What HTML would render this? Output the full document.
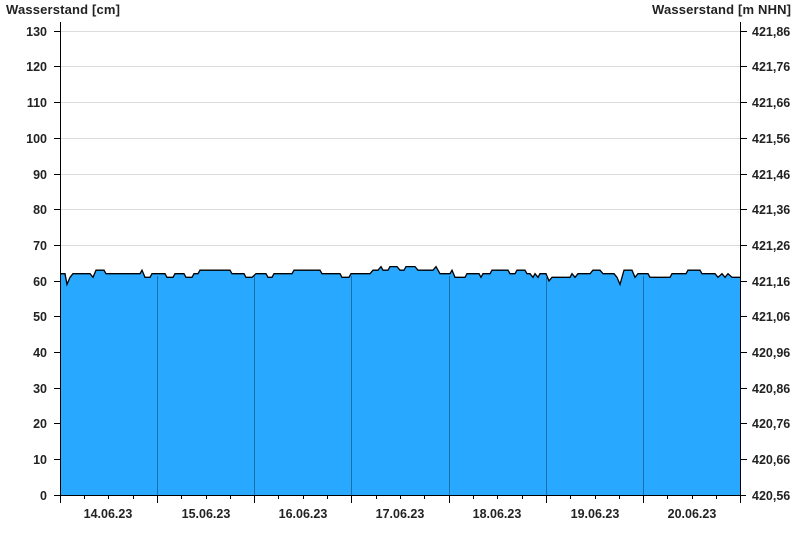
<!DOCTYPE html>
<html><head><meta charset="utf-8"><style>
html,body{margin:0;padding:0;background:#fff;width:800px;height:550px;overflow:hidden}
svg text{font-family:"Liberation Sans",Arial,sans-serif;font-weight:bold;font-size:12.5px;fill:#222}
svg text.t{font-size:13px}
</style></head><body>
<svg width="800" height="550" xmlns="http://www.w3.org/2000/svg">
<g stroke="#ddd" stroke-width="1">
<line x1="60" y1="31.5" x2="740" y2="31.5"/><line x1="60" y1="66.5" x2="740" y2="66.5"/>
<line x1="60" y1="102.5" x2="740" y2="102.5"/><line x1="60" y1="138.5" x2="740" y2="138.5"/>
<line x1="60" y1="174.5" x2="740" y2="174.5"/><line x1="60" y1="209.5" x2="740" y2="209.5"/>
<line x1="60" y1="245.5" x2="740" y2="245.5"/>
</g>
<polygon fill="#29a8ff" stroke="none" points="60,495 60,273.7 65,273.7 67,284.4 70,277.3 73,273.7 90,273.7 93,277.3 96,270.2 104,270.2 106,273.7 140,273.7 142,270.2 145,277.3 150,277.3 152,273.7 165,273.7 167,277.3 173,277.3 175,273.7 184,273.7 186,277.3 192,277.3 194,273.7 198,273.7 200,270.2 230,270.2 232,273.7 244,273.7 246,277.3 252,277.3 256,273.7 266,273.7 268,277.3 272,277.3 274,273.7 292,273.7 294,270.2 320,270.2 322,273.7 340,273.7 342,277.3 349,277.3 351,273.7 370,273.7 373,270.2 378,270.2 381,266.6 383,270.2 388,270.2 390,266.6 397,266.6 400,270.2 404,270.2 406,266.6 415,266.6 418,270.2 433,270.2 436,266.6 440,273.7 450,273.7 452,270.2 455,277.3 465,277.3 467,273.7 479,273.7 481,277.3 483,273.7 490,273.7 492,270.2 508,270.2 510,273.7 515,273.7 517,270.2 525,270.2 527,273.7 530,273.7 533,277.3 535,273.7 538,277.3 540,273.7 546,273.7 549,280.9 552,277.3 570,277.3 572,273.7 575,277.3 578,273.7 590,273.7 593,270.2 600,270.2 603,273.7 614,273.7 617,277.3 620,284.4 624,270.2 632,270.2 635,277.3 638,273.7 648,273.7 650,277.3 670,277.3 672,273.7 686,273.7 688,270.2 700,270.2 702,273.7 715,273.7 718,277.3 722,273.7 725,277.3 728,273.7 732,277.3 740,277.3 740,495"/>
<polyline fill="none" stroke="#000" stroke-width="1.3" points="60,273.7 65,273.7 67,284.4 70,277.3 73,273.7 90,273.7 93,277.3 96,270.2 104,270.2 106,273.7 140,273.7 142,270.2 145,277.3 150,277.3 152,273.7 165,273.7 167,277.3 173,277.3 175,273.7 184,273.7 186,277.3 192,277.3 194,273.7 198,273.7 200,270.2 230,270.2 232,273.7 244,273.7 246,277.3 252,277.3 256,273.7 266,273.7 268,277.3 272,277.3 274,273.7 292,273.7 294,270.2 320,270.2 322,273.7 340,273.7 342,277.3 349,277.3 351,273.7 370,273.7 373,270.2 378,270.2 381,266.6 383,270.2 388,270.2 390,266.6 397,266.6 400,270.2 404,270.2 406,266.6 415,266.6 418,270.2 433,270.2 436,266.6 440,273.7 450,273.7 452,270.2 455,277.3 465,277.3 467,273.7 479,273.7 481,277.3 483,273.7 490,273.7 492,270.2 508,270.2 510,273.7 515,273.7 517,270.2 525,270.2 527,273.7 530,273.7 533,277.3 535,273.7 538,277.3 540,273.7 546,273.7 549,280.9 552,277.3 570,277.3 572,273.7 575,277.3 578,273.7 590,273.7 593,270.2 600,270.2 603,273.7 614,273.7 617,277.3 620,284.4 624,270.2 632,270.2 635,277.3 638,273.7 648,273.7 650,277.3 670,277.3 672,273.7 686,273.7 688,270.2 700,270.2 702,273.7 715,273.7 718,277.3 722,273.7 725,277.3 728,273.7 732,277.3 740,277.3"/>
<g stroke="#1b6ea8" stroke-width="1">
<line x1="157.5" y1="276" x2="157.5" y2="495"/><line x1="254.5" y1="276" x2="254.5" y2="495"/>
<line x1="351.5" y1="276" x2="351.5" y2="495"/><line x1="449.5" y1="276" x2="449.5" y2="495"/>
<line x1="546.5" y1="276" x2="546.5" y2="495"/><line x1="643.5" y1="276" x2="643.5" y2="495"/>
</g>
<g stroke="#000" stroke-width="1">
<line x1="60.5" y1="22" x2="60.5" y2="496"/>
<line x1="740.5" y1="22" x2="740.5" y2="496"/>
<line x1="54" y1="495.5" x2="746" y2="495.5"/>
</g>
<g stroke="#000" stroke-width="1" id="lt">
<line x1="54" y1="31.5" x2="60" y2="31.5"/><line x1="54" y1="66.5" x2="60" y2="66.5"/><line x1="54" y1="102.5" x2="60" y2="102.5"/><line x1="54" y1="138.5" x2="60" y2="138.5"/><line x1="54" y1="174.5" x2="60" y2="174.5"/><line x1="54" y1="209.5" x2="60" y2="209.5"/><line x1="54" y1="245.5" x2="60" y2="245.5"/><line x1="54" y1="281.5" x2="60" y2="281.5"/><line x1="54" y1="316.5" x2="60" y2="316.5"/><line x1="54" y1="352.5" x2="60" y2="352.5"/><line x1="54" y1="388.5" x2="60" y2="388.5"/><line x1="54" y1="423.5" x2="60" y2="423.5"/><line x1="54" y1="459.5" x2="60" y2="459.5"/>
</g>
<use href="#lt" transform="translate(687,0)"/>
<g stroke="#000" stroke-width="1">
<line x1="60.5" y1="495" x2="60.5" y2="503"/><line x1="157.5" y1="495" x2="157.5" y2="503"/><line x1="254.5" y1="495" x2="254.5" y2="503"/><line x1="351.5" y1="495" x2="351.5" y2="503"/><line x1="449.5" y1="495" x2="449.5" y2="503"/><line x1="546.5" y1="495" x2="546.5" y2="503"/><line x1="643.5" y1="495" x2="643.5" y2="503"/><line x1="740.5" y1="495" x2="740.5" y2="503"/>
<line x1="84.5" y1="495" x2="84.5" y2="499"/><line x1="108.5" y1="495" x2="108.5" y2="499"/><line x1="133.5" y1="495" x2="133.5" y2="499"/>
<line x1="181.5" y1="495" x2="181.5" y2="499"/><line x1="206.5" y1="495" x2="206.5" y2="499"/><line x1="230.5" y1="495" x2="230.5" y2="499"/>
<line x1="278.5" y1="495" x2="278.5" y2="499"/><line x1="303.5" y1="495" x2="303.5" y2="499"/><line x1="327.5" y1="495" x2="327.5" y2="499"/>
<line x1="376.5" y1="495" x2="376.5" y2="499"/><line x1="400.5" y1="495" x2="400.5" y2="499"/><line x1="424.5" y1="495" x2="424.5" y2="499"/>
<line x1="473.5" y1="495" x2="473.5" y2="499"/><line x1="497.5" y1="495" x2="497.5" y2="499"/><line x1="522.5" y1="495" x2="522.5" y2="499"/>
<line x1="570.5" y1="495" x2="570.5" y2="499"/><line x1="595.5" y1="495" x2="595.5" y2="499"/><line x1="619.5" y1="495" x2="619.5" y2="499"/>
<line x1="667.5" y1="495" x2="667.5" y2="499"/><line x1="692.5" y1="495" x2="692.5" y2="499"/><line x1="716.5" y1="495" x2="716.5" y2="499"/>
</g>
<text class="t" x="6" y="14" textLength="114">Wasserstand [cm]</text>
<text class="t" x="652" y="14" textLength="139">Wasserstand [m NHN]</text>
<g text-anchor="end">
<text x="47" y="36">130</text><text x="47" y="71">120</text><text x="47" y="107">110</text><text x="47" y="143">100</text><text x="47" y="179">90</text><text x="47" y="214">80</text><text x="47" y="250">70</text><text x="47" y="286">60</text><text x="47" y="321">50</text><text x="47" y="357">40</text><text x="47" y="393">30</text><text x="47" y="428">20</text><text x="47" y="464">10</text><text x="47" y="500">0</text>
</g>
<g>
<text x="752" y="36">421,86</text><text x="752" y="71">421,76</text><text x="752" y="107">421,66</text><text x="752" y="143">421,56</text><text x="752" y="179">421,46</text><text x="752" y="214">421,36</text><text x="752" y="250">421,26</text><text x="752" y="286">421,16</text><text x="752" y="321">421,06</text><text x="752" y="357">420,96</text><text x="752" y="393">420,86</text><text x="752" y="428">420,76</text><text x="752" y="464">420,66</text><text x="752" y="500">420,56</text>
</g>
<g text-anchor="middle">
<text x="108" y="518">14.06.23</text><text x="206" y="518">15.06.23</text><text x="303" y="518">16.06.23</text><text x="400" y="518">17.06.23</text><text x="497" y="518">18.06.23</text><text x="595" y="518">19.06.23</text><text x="692" y="518">20.06.23</text>
</g>
</svg>
</body></html>
